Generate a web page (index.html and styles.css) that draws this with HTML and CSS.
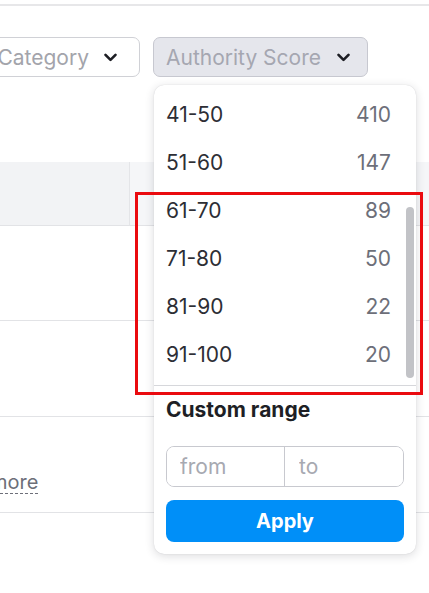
FILE: index.html
```html
<!DOCTYPE html>
<html>
<head>
<meta charset="utf-8">
<link rel="stylesheet" href="styles.css">
</head>
<body>
<div class="page">
  <div class="topline"></div>
  <div class="filters">
    <div class="select select-category">
      <span class="select-label">Category</span>
      <svg class="chev" width="13" height="9" viewBox="0 0 13 9"><path d="M1.5 1.8 L6.5 6.8 L11.5 1.8" fill="none" stroke="#1d1e24" stroke-width="2.6" stroke-linecap="round" stroke-linejoin="round"/></svg>
    </div>
    <div class="select-wrap">
      <div class="select select-active">
        <span class="select-label">Authority Score</span>
        <svg class="chev" width="13" height="9" viewBox="0 0 13 9"><path d="M1.5 1.8 L6.5 6.8 L11.5 1.8" fill="none" stroke="#1d1e24" stroke-width="2.6" stroke-linecap="round" stroke-linejoin="round"/></svg>
      </div>
      <div class="dropdown">
        <div class="options">
          <div class="option"><span>41-50</span><span class="count">410</span></div>
          <div class="option"><span>51-60</span><span class="count">147</span></div>
          <div class="option"><span>61-70</span><span class="count">89</span></div>
          <div class="option"><span>71-80</span><span class="count">50</span></div>
          <div class="option"><span>81-90</span><span class="count">22</span></div>
          <div class="option"><span>91-100</span><span class="count">20</span></div>
          <div class="scroll-thumb"></div>
        </div>
        <div class="custom">
          <div class="custom-title">Custom range</div>
          <div class="range">
            <input class="range-input" type="text" placeholder="from">
            <input class="range-input range-to" type="text" placeholder="to">
          </div>
          <button class="apply">Apply</button>
        </div>
      </div>
    </div>
  </div>
  <div class="table">
    <div class="thead">
      <div class="th th-first"></div>
      <div class="th th-rest"></div>
    </div>
    <div class="row row-1"></div>
    <div class="row row-2"></div>
    <div class="row row-3">
      <span class="more">more</span>
    </div>
  </div>
  <div class="highlight"></div>
</div>
</body>
</html>
```
FILE: styles.css
```css
* { box-sizing: border-box; }
html, body {
  margin: 0;
  padding: 0;
  background: #ffffff;
  overflow: hidden;
}
body {
  font-family: "Inter", "Noto Sans", sans-serif;
  color: #2b2c33;
}
.page {
  position: relative;
  width: 429px;
  height: 593px;
  overflow: hidden;
}
.topline {
  margin-top: 4px;
  height: 2px;
  background: #e7e7e9;
}
.filters {
  margin-top: 31px;
  display: flex;
  gap: 13px;
  height: 40px;
  position: relative;
  z-index: 5;
}
.select {
  display: flex;
  align-items: center;
  height: 40px;
  border: 1px solid #d0d1d6;
  border-radius: 7px;
  font-size: 21px;
  color: #a3a4ab;
  background: #fff;
  flex: none;
}
.select-category {
  width: 157px;
  margin-left: -17px;
  padding: 0 22px 0 0;
  gap: 15px;
  justify-content: flex-end;
}
.select-wrap {
  position: relative;
  flex: none;
}
.select-active {
  background: #e5e6ec;
  border-color: #c7c8d0;
  padding: 0 20px 0 12px;
  gap: 16px;
  width: 215px;
  justify-content: space-between;
  color: #a5a7b1;
}
.select-label { white-space: nowrap; }
.chev { flex: none; }

.dropdown {
  position: absolute;
  top: 48px;
  left: 1px;
  width: 262px;
  background: #fff;
  border-radius: 10px;
  box-shadow: 0 2px 10px rgba(30, 32, 45, 0.16), 0 0 1px rgba(30, 32, 45, 0.2);
  padding-bottom: 12px;
}
.options {
  position: relative;
  padding: 5px 0 7px;
  border-bottom: 1px solid #d6d7db;
}
.option {
  display: flex;
  justify-content: space-between;
  align-items: center;
  height: 48px;
  padding: 0 25px 0 12px;
  font-size: 21px;
  color: #2d2e35;
}
.count { color: #6d6f79; }
.scroll-thumb {
  position: absolute;
  left: 252px;
  top: 122px;
  width: 8px;
  height: 171px;
  border-radius: 4px;
  background: #c2c3c7;
}
.custom {
  padding: 12px 12px 0;
}
.custom-title {
  font-size: 21px;
  font-weight: 700;
  line-height: 24px;
  color: #1e1f25;
}
.range {
  display: flex;
  margin-top: 24px;
  height: 41px;
  border: 1px solid #c8c9cf;
  border-radius: 8px;
  overflow: hidden;
}
.range-input {
  flex: 1;
  min-width: 0;
  border: 0;
  outline: 0;
  padding: 0 13px;
  font-family: inherit;
  font-size: 21px;
  color: #2d2e35;
  background: #fff;
}
.range-to {
  border-left: 1px solid #c8c9cf;
  padding-left: 14px;
}
.range-input::placeholder { color: #a7a9b1; }
.apply {
  display: block;
  width: 100%;
  margin-top: 13px;
  height: 42px;
  border: 0;
  border-radius: 8px;
  background: #008ff8;
  color: #fff;
  font-family: inherit;
  font-size: 20px;
  font-weight: 700;
}

.table {
  margin-top: 85px;
}
.thead {
  display: flex;
  height: 64px;
  border-bottom: 1px solid #e2e3e6;
}
.th-first {
  width: 130px;
  background: #f2f3f5;
  border-right: 1px solid #e4e5e8;
}
.th-rest {
  flex: 1;
  background: #f5f6f8;
}
.row {
  border-bottom: 1px solid #e2e3e6;
}
.row-1 { height: 95px; }
.row-2 { height: 96px; }
.row-3 {
  height: 96px;
  display: flex;
  align-items: flex-end;
  padding-bottom: 18px;
}
.more {
  margin-left: -10px;
  font-size: 20px;
  line-height: 22px;
  color: #6d6f79;
  border-bottom: 1px dashed #6d6f79;
}
.highlight {
  position: absolute;
  left: 135px;
  top: 192px;
  width: 288px;
  height: 203px;
  border: 3px solid #ea0a0f;
  z-index: 10;
}
```
